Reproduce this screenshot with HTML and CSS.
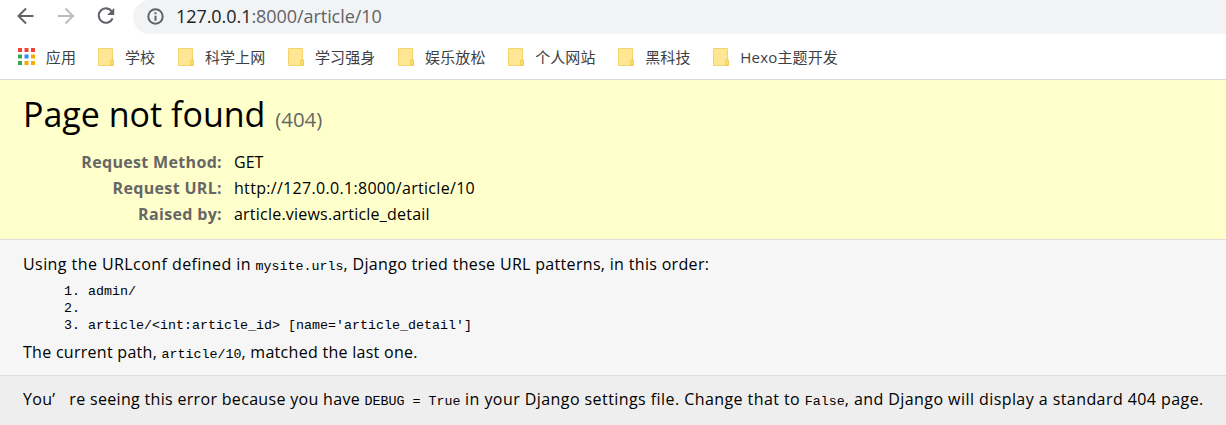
FILE: index.html
```html
<!DOCTYPE html>
<html lang="zh-CN">
<head>
<meta charset="utf-8">
<title>Page not found at /article/10</title>
<link rel="stylesheet" href="styles.css">
</head>
<body>
<svg class="defs" width="0" height="0" aria-hidden="true">
  <symbol id="folder" viewBox="0 0 16 18">
    <path d="M1 0h13a1 1 0 0 1 1 1V11.500h.8V18H1a1 1 0 0 1-1-1V1a1 1 0 0 1 1-1z" fill="#f3d36b"/>
    <path d="M1 1h13V11.500l-1.500 1V17H1z" fill="#ffe693"/>
    <path d="M12.800 12.200h2.400v4.800h-2.400z" fill="#ffe37a" stroke="#efc94e" stroke-width=".9"/>
  </symbol>
</svg>
<header class="browser">
  <div class="toolbar">
    <svg class="nav" viewBox="0 0 18 18"><path d="M16.500 9H2M9 1.500 1.500 9 9 16.500" fill="none" stroke="#5f6368" stroke-width="2"/></svg>
    <svg class="nav" viewBox="0 0 18 18"><path d="M.8 9H15M8.500 1.500 16 9 8.500 16.500" fill="none" stroke="#babcbe" stroke-width="2"/></svg>
    <svg class="nav" viewBox="0 0 18 18"><path d="M14.800 4.300A7.200 7.200 0 1 0 15.600 11.300" fill="none" stroke="#5f6368" stroke-width="2.100"/><path d="M17.200 1v7h-7z" fill="#5f6368"/></svg>
    <div class="address">
      <svg class="info" viewBox="0 0 18 18"><circle cx="9.500" cy="8.500" r="7.200" fill="none" stroke="#5f6368" stroke-width="2"/><path d="M8.500 7.700h2v5h-2zM8.500 4.300h2v2h-2z" fill="#5f6368"/></svg>
      <span class="url"><span class="host">127.0.0.1</span>:8000/article/10</span>
    </div>
  </div>
  <nav class="bookmarks">
    <a class="mark"><svg class="apps" viewBox="0 0 17 17"><path d="M0 0h4v4H0zM6.500 0h4v4h-4zM13 0h4v4h-4z" fill="#f44336"/><path d="M0 6.500h4v4H0zM0 13h4v4H0z" fill="#34a853"/><path d="M6.500 6.500h4v4h-4z" fill="#2a8cf5"/><path d="M13 6.500h4v4h-4zM6.500 13h4v4h-4zM13 13h4v4h-4z" fill="#f9ab00"/></svg>应用</a>
    <a class="mark"><svg class="folder"><use href="#folder"/></svg>学校</a>
    <a class="mark"><svg class="folder"><use href="#folder"/></svg>科学上网</a>
    <a class="mark"><svg class="folder"><use href="#folder"/></svg>学习强身</a>
    <a class="mark"><svg class="folder"><use href="#folder"/></svg>娱乐放松</a>
    <a class="mark"><svg class="folder"><use href="#folder"/></svg>个人网站</a>
    <a class="mark"><svg class="folder"><use href="#folder"/></svg>黑科技</a>
    <a class="mark"><svg class="folder"><use href="#folder"/></svg><span><span class="latin">Hexo</span>主题开发</span></a>
  </nav>
</header>
<section class="summary">
  <h1>Page not found <span class="status">(404)</span></h1>
  <dl class="meta">
    <dt>Request Method:</dt><dd>GET</dd>
    <dt>Request URL:</dt><dd class="request-url">http://127.0.0.1:8000/article/10</dd>
    <dt>Raised by:</dt><dd class="view-name">article.views.article_detail</dd>
  </dl>
</section>
<main class="info-panel">
  <p><span class="wide">Using the URLconf defined in </span><code>mysite.urls</code><span class="medium">, Django tried these URL patterns, in this order:</span></p>
  <ol class="patterns">
    <li>admin/</li>
    <li></li>
    <li>article/&lt;int:article_id&gt; [name='article_detail']</li>
  </ol>
  <p><span class="snug">The current path, </span><code>article/10</code><span class="snug">, matched the last one.</span></p>
</main>
<footer class="explanation">
  <p><span class="medium">You<span class="apos">’</span>re seeing this error because you have </span><code>DEBUG = True</code><span class="wide"> in your Django settings file. Change that to </span><code>False</code><span class="wide">, and Django will display a standard 404 page.</span></p>
</footer>
</body>
</html>
```
FILE: styles.css
```css
* { box-sizing: border-box; margin: 0; padding: 0; }
body { width: 1226px; height: 425px; overflow: hidden; background: #eee; color: #000; font: 16px/26px "Open Sans", "Noto Sans CJK SC", sans-serif; }
.defs { display: block; }

.browser { height: 80px; background: #fff; border-bottom: 1px solid #dadada; }
.toolbar { display: flex; height: 34px; padding-left: 17px; }
.nav { flex: none; width: 18px; height: 18px; margin: 7px 22px 0 0; }
.address { display: flex; flex: 1; height: 34px; margin-left: -4px; padding-left: 13px; background: #f1f3f4; border-radius: 17px 0 0 17px; }
.info { width: 18px; height: 18px; margin: 8px 12px 0 0; }
.url { font-size: 18px; line-height: 33px; letter-spacing: -.06px; color: #5f6368; white-space: nowrap; }
.host { color: #202124; }

.bookmarks { display: flex; height: 45px; padding-left: 18px; gap: 22px; }
.mark { display: flex; align-items: center; height: 46px; font: 400 15px/20px "Noto Sans CJK SC", sans-serif; letter-spacing: .1px; color: #3c4043; white-space: nowrap; }
.mark:nth-child(n+2) { padding-right: .7px; }
.latin { font-family: "Open Sans", sans-serif; letter-spacing: .2px; }
.apps { width: 17px; height: 17px; margin: 0 10.8px 1px 0; }
.folder { width: 16px; height: 18px; margin-right: 11px; }

.summary { height: 160px; padding: 11px 23px 0; background: #ffc; border-bottom: 1px solid #ddd; }
h1 { height: 58px; font-size: 34px; line-height: 46px; font-weight: 400; white-space: nowrap; }
.status { margin-left: 1px; font-size: 20.4px; color: #666; }
.meta { display: grid; grid-template-columns: 199px 1fr; column-gap: 12px; }
dt { text-align: right; font-weight: 700; letter-spacing: .33px; color: #666; }
.request-url { letter-spacing: .31px; }
.view-name { letter-spacing: .22px; }

.info-panel { height: 136px; padding: 11px 23px 0; background: #f6f6f6; border-bottom: 1px solid #ddd; }
p { height: 26px; white-space: pre; }
.snug { letter-spacing: .28px; }
.medium { letter-spacing: .32px; }
.wide { letter-spacing: .43px; }
code, .patterns { font-family: "Liberation Mono", monospace; font-size: 13.333px; }
.patterns { margin: 6px 0 5px 65px; line-height: 17px; list-style: none; counter-reset: n; }
.patterns li { height: 17px; counter-increment: n; white-space: pre; }
.patterns li::before { content: counter(n) "."; display: inline-block; width: 24px; margin-left: -24px; }

.explanation { height: 49px; padding: 10px 23px 0; background: #eee; }
.apos { display: inline-block; width: 17px; }
```
